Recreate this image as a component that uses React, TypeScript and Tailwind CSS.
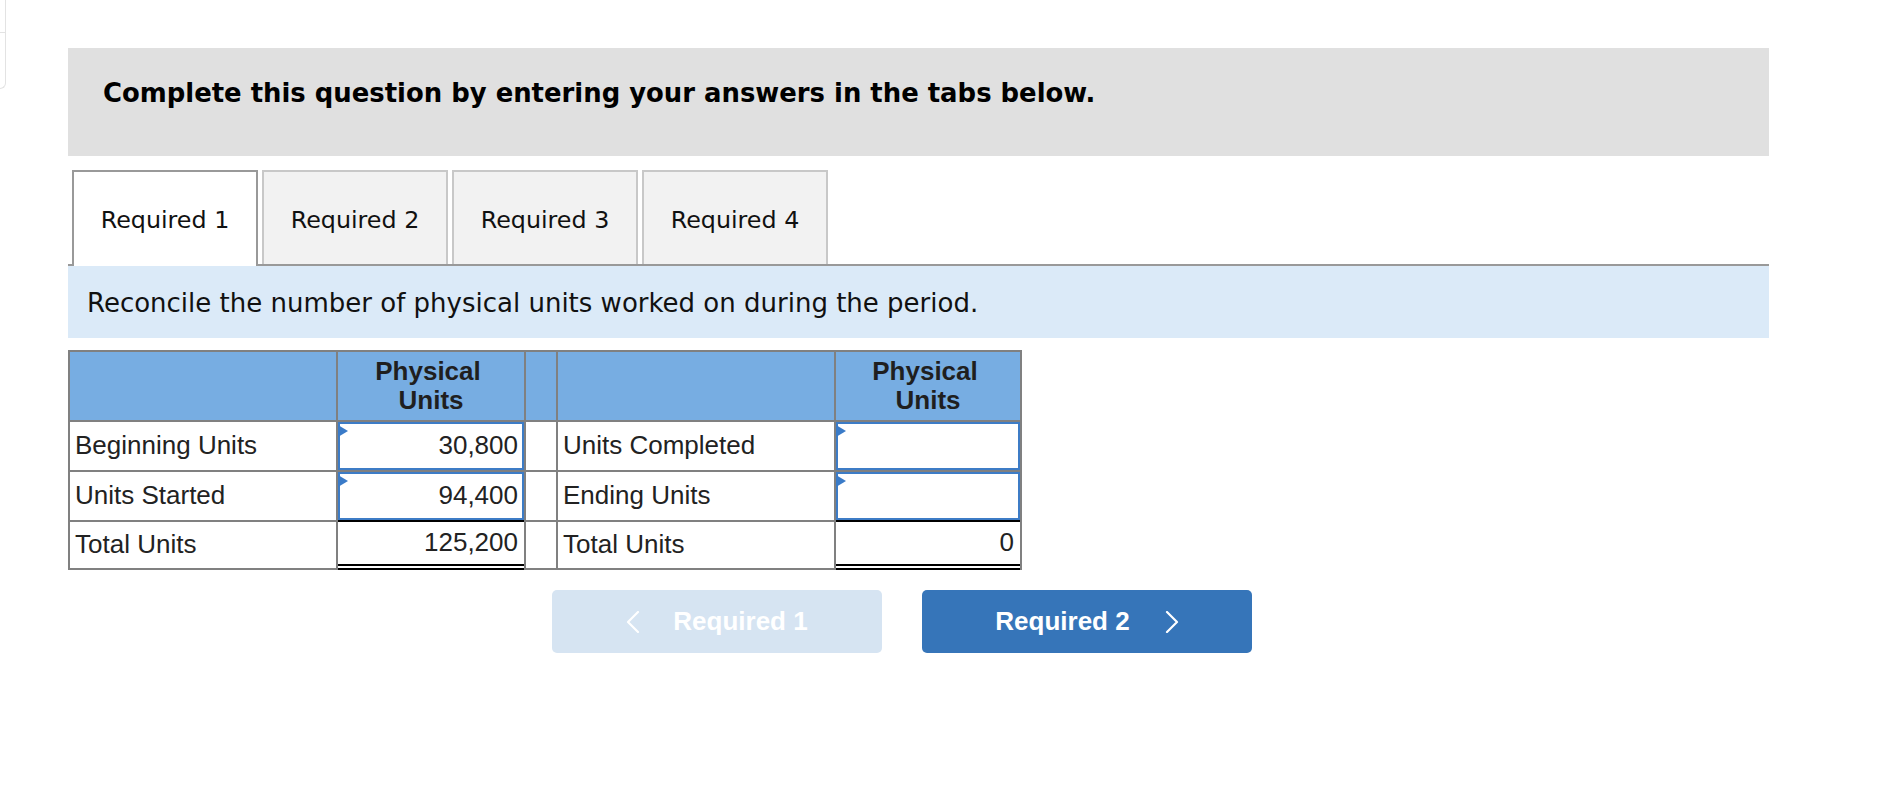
import React from "react";

const verdana = "font-['DejaVu_Sans',Verdana,sans-serif]";
const arial = "font-['Liberation_Sans',Arial,Helvetica,sans-serif]";

function Marker() {
  return (
    <svg className="absolute left-[-2px] top-[1px]" width="10" height="12" viewBox="0 0 10 12">
      <polygon points="0,0 10,6 0,12" fill="#3a7bc8" />
    </svg>
  );
}

function InputCell({ value }: { value?: string }) {
  return (
    <div className="bg-white">
      <div className="relative h-full border-2 border-[#3d7cc6] bg-white flex items-center justify-end pr-[4px] text-[#222]">
        <Marker />
        {value}
      </div>
    </div>
  );
}

function Chevron({ dir }: { dir: "left" | "right" }) {
  return (
    <svg width="14" height="22" viewBox="0 0 14 22" fill="none">
      <polyline
        points={dir === "left" ? "12,1 2,11 12,21" : "2,1 12,11 2,21"}
        stroke="white"
        strokeWidth="2.2"
        strokeLinecap="round"
        strokeLinejoin="round"
      />
    </svg>
  );
}

export default function App() {
  return (
    <div className="w-[1900px] min-h-[794px] bg-white flex items-start">
      <div className="w-[6px] h-[89px] shrink-0 border-r border-b border-[#e3e3e3] rounded-br-[6px]">
        <div className="h-[33px] border-b border-[#e3e3e3]" />
      </div>

      <div className="ml-[62px] mt-[48px] w-[1701px] flex flex-col">
        <div className="h-[108px] bg-[#e0e0e0] pl-[35px] pt-[30px]">
          <h2 className={`${verdana} font-bold text-[25.9px] leading-[30px] text-black`}>
            Complete this question by entering your answers in the tabs below.
          </h2>
        </div>

        <div className={`mt-[14px] flex items-end gap-[4px] pl-[4px] border-b-2 border-[#999999] ${verdana} text-[23.8px] leading-[28px] text-[#111]`}>
          <div className="w-[186px] h-[96px] -mb-[2px] bg-white border-2 border-b-0 border-[#999999] text-center pt-[34px]">
            Required 1
          </div>
          <div className="w-[186px] h-[94px] bg-[#f2f2f2] border-2 border-b-0 border-[#c8c8c8] text-center pt-[34px]">
            Required 2
          </div>
          <div className="w-[186px] h-[94px] bg-[#f2f2f2] border-2 border-b-0 border-[#c8c8c8] text-center pt-[34px]">
            Required 3
          </div>
          <div className="w-[186px] h-[94px] bg-[#f2f2f2] border-2 border-b-0 border-[#c8c8c8] text-center pt-[34px]">
            Required 4
          </div>
        </div>

        <div className="h-[72px] bg-[#dbeaf8] pl-[19px] pt-[22px]">
          <p className={`${verdana} text-[26px] leading-[30px] text-[#111]`}>
            Reconcile the number of physical units worked on during the period.
          </p>
        </div>

        <div
          className={`mt-[12px] w-[954px] bg-[#808080] p-[2px] grid grid-cols-[266px_186px_30px_276px_184px] grid-rows-[68px_48px_48px_46px] gap-[2px] ${arial} text-[26px] leading-[29.5px] text-[#222]`}
        >
          <div className="bg-[#77ade2]" />
          <div className="bg-[#77ade2] flex flex-col items-center justify-center font-bold text-[#1f1f1f]">
            <span className="-ml-[6px]">Physical</span>
            <span>Units</span>
          </div>
          <div className="bg-[#77ade2]" />
          <div className="bg-[#77ade2]" />
          <div className="bg-[#77ade2] flex flex-col items-center justify-center font-bold text-[#1f1f1f]">
            <span className="-ml-[6px]">Physical</span>
            <span>Units</span>
          </div>

          <div className="bg-white flex items-center pl-[5px]">Beginning Units</div>
          <InputCell value="30,800" />
          <div className="bg-white" />
          <div className="bg-white flex items-center pl-[5px]">Units Completed</div>
          <InputCell />

          <div className="bg-white flex items-center pl-[5px]">Units Started</div>
          <InputCell value="94,400" />
          <div className="bg-white" />
          <div className="bg-white flex items-center pl-[5px]">Ending Units</div>
          <InputCell />

          <div className="bg-white flex items-center pl-[5px]">Total Units</div>
          <div className="-mt-[2px] -mb-[2px] bg-white border-t-2 border-t-black border-b-[6px] border-b-black border-double flex items-center justify-end pr-[6px]">
            125,200
          </div>
          <div className="bg-white" />
          <div className="bg-white flex items-center pl-[5px]">Total Units</div>
          <div className="-mt-[2px] -mb-[2px] bg-white border-t-2 border-t-black border-b-[6px] border-b-black border-double flex items-center justify-end pr-[6px]">
            0
          </div>
        </div>

        <div className={`mt-[20px] ml-[484px] flex gap-[40px] ${arial} font-bold text-[26px] text-white`}>
          <button className="w-[330px] h-[63px] rounded-[5px] bg-[#d6e4f2] flex items-center justify-center gap-[33px]">
            <Chevron dir="left" />
            <span>Required 1</span>
          </button>
          <button className="w-[330px] h-[63px] rounded-[5px] bg-[#3675b9] flex items-center justify-center gap-[35px]">
            <span>Required 2</span>
            <Chevron dir="right" />
          </button>
        </div>
      </div>
    </div>
  );
}
